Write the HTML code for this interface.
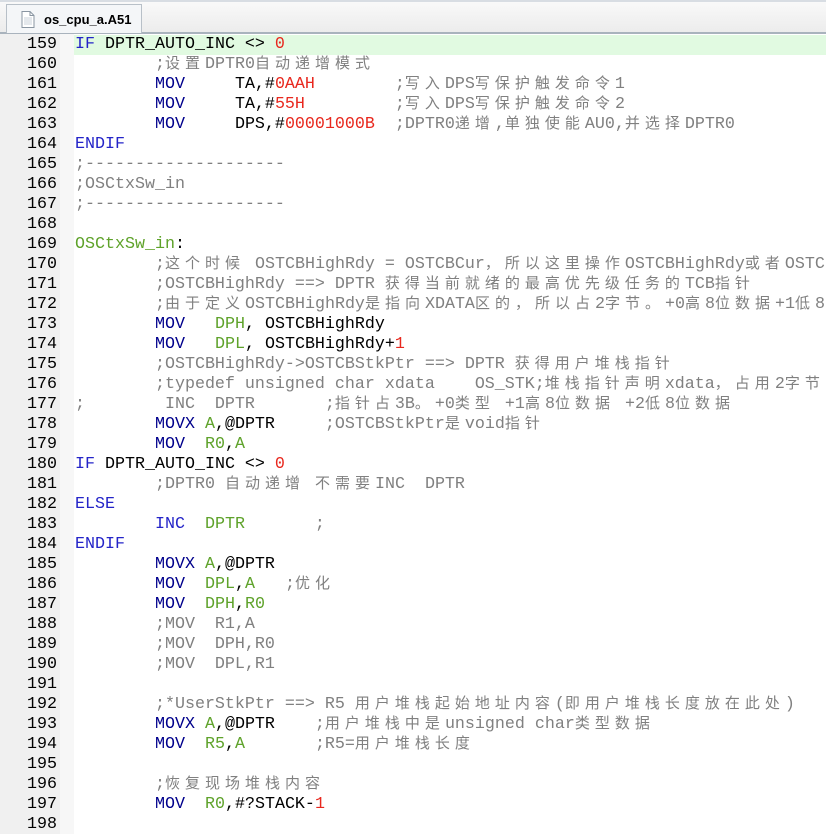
<!DOCTYPE html>
<html><head><meta charset="utf-8"><style>
body{margin:0;width:826px;height:826px;overflow:hidden;background:#fff;position:relative;font-family:"Liberation Mono","DejaVu Sans Mono",monospace;}
#tabbar{position:absolute;left:0;top:0;width:826px;height:32px;background:linear-gradient(#fafafa,#ececec);border-bottom:2px solid #a9b3bd;}
#tabbar:before{content:"";position:absolute;left:0;top:0;width:826px;height:2px;background:#d8dde3}
#tab{position:absolute;left:6px;top:4px;width:136px;height:29px;background:#f4f6f8;border:1px solid #b8c0c8;border-bottom:none;box-sizing:border-box;font:bold 13px "Liberation Sans",sans-serif;color:#000;}
#tab span{position:absolute;left:37px;top:7px}
#gut{position:absolute;left:0;top:34px;width:60px;height:800px;background:#f0f0f0}
#gut2{position:absolute;left:60px;top:34px;width:14px;height:800px;background:#f7f7f7}
#hl{position:absolute;left:74px;top:35px;width:752px;height:20px;background:#e1fae1}
.ln{position:absolute;left:0;width:57px;height:20px;text-align:right;font-family:"Liberation Mono",monospace;font-size:16.67px;line-height:20px;color:#000}
.cd{position:absolute;left:75px;height:20px;overflow:hidden;font-family:"Liberation Mono","DejaVu Sans Mono",monospace;font-size:16.67px;line-height:20px;white-space:pre;color:#000}
.k{color:#2424c8}.m{color:#00008c}.g{color:#5ea22a}.r{color:#e8281e}.c{color:#808080}
b{font-weight:normal;font-size:15px;line-height:1;letter-spacing:5px;font-family:"Noto Sans CJK SC",sans-serif;vertical-align:baseline}
</style></head><body>
<div id="tabbar"><div id="tab"><svg style="position:absolute;left:14px;top:6px" width="14" height="17" viewBox="0 0 14 17"><path d="M1 .5h8l4 4v12H1z" fill="#fff" stroke="#8a96a2"/><path d="M9 .5v4h4" fill="none" stroke="#8a96a2"/><path d="M3 7h8M3 9h8M3 11h8M3 13h8" stroke="#c8d0d8"/></svg><span>os_cpu_a.A51</span></div></div>
<div id="gut"></div><div id="gut2"></div><div id="hl"></div>
<div class="ln" style="top:35px">159</div><div class="cd" style="top:35px"><span class="k">IF</span> DPTR_AUTO_INC &lt;&gt; <span class="r">0</span></div>
<div class="ln" style="top:55px">160</div><div class="cd c" style="top:55px">        ;<b>设置</b>DPTR0<b>自动递增模式</b></div>
<div class="ln" style="top:75px">161</div><div class="cd" style="top:75px">        <span class="m">MOV</span>     TA,#<span class="r">0AAH</span>        <span class="c">;<b>写入</b>DPS<b>写保护触发命令</b>1</span></div>
<div class="ln" style="top:95px">162</div><div class="cd" style="top:95px">        <span class="m">MOV</span>     TA,#<span class="r">55H</span>         <span class="c">;<b>写入</b>DPS<b>写保护触发命令</b>2</span></div>
<div class="ln" style="top:115px">163</div><div class="cd" style="top:115px">        <span class="m">MOV</span>     DPS,#<span class="r">00001000B</span>  <span class="c">;DPTR0<b>递增</b>,<b>单独使能</b>AU0,<b>并选择</b>DPTR0</span></div>
<div class="ln" style="top:135px">164</div><div class="cd k" style="top:135px">ENDIF</div>
<div class="ln" style="top:155px">165</div><div class="cd c" style="top:155px">;--------------------</div>
<div class="ln" style="top:175px">166</div><div class="cd c" style="top:175px">;OSCtxSw_in</div>
<div class="ln" style="top:195px">167</div><div class="cd c" style="top:195px">;--------------------</div>
<div class="ln" style="top:215px">168</div>
<div class="ln" style="top:235px">169</div><div class="cd" style="top:235px"><span class="g">OSCtxSw_in</span>:</div>
<div class="ln" style="top:255px">170</div><div class="cd c" style="top:255px">        ;<b>这个时候</b> OSTCBHighRdy = OSTCBCur<b>，所以这里操作</b>OSTCBHighRdy<b>或者</b>OSTC</div>
<div class="ln" style="top:275px">171</div><div class="cd c" style="top:275px">        ;OSTCBHighRdy ==&gt; DPTR <b>获得当前就绪的最高优先级任务的</b>TCB<b>指针</b></div>
<div class="ln" style="top:295px">172</div><div class="cd c" style="top:295px">        ;<b>由于定义</b>OSTCBHighRdy<b>是指向</b>XDATA<b>区的，所以占</b>2<b>字节。</b>+0<b>高</b>8<b>位数据</b>+1<b>低</b>8</div>
<div class="ln" style="top:315px">173</div><div class="cd" style="top:315px">        <span class="m">MOV</span>   <span class="g">DPH</span>, OSTCBHighRdy</div>
<div class="ln" style="top:335px">174</div><div class="cd" style="top:335px">        <span class="m">MOV</span>   <span class="g">DPL</span>, OSTCBHighRdy+<span class="r">1</span></div>
<div class="ln" style="top:355px">175</div><div class="cd c" style="top:355px">        ;OSTCBHighRdy-&gt;OSTCBStkPtr ==&gt; DPTR <b>获得用户堆栈指针</b></div>
<div class="ln" style="top:375px">176</div><div class="cd c" style="top:375px">        ;typedef unsigned char xdata    OS_STK;<b>堆栈指针声明</b>xdata<b>，占用</b>2<b>字节</b></div>
<div class="ln" style="top:395px">177</div><div class="cd c" style="top:395px">;        INC  DPTR       ;<b>指针占</b>3B<b>。</b>+0<b>类型</b> +1<b>高</b>8<b>位数据</b> +2<b>低</b>8<b>位数据</b></div>
<div class="ln" style="top:415px">178</div><div class="cd" style="top:415px">        <span class="m">MOVX</span> <span class="g">A</span>,@DPTR     <span class="c">;OSTCBStkPtr<b>是</b>void<b>指针</b></span></div>
<div class="ln" style="top:435px">179</div><div class="cd" style="top:435px">        <span class="m">MOV</span>  <span class="g">R0</span>,<span class="g">A</span></div>
<div class="ln" style="top:455px">180</div><div class="cd" style="top:455px"><span class="k">IF</span> DPTR_AUTO_INC &lt;&gt; <span class="r">0</span></div>
<div class="ln" style="top:475px">181</div><div class="cd c" style="top:475px">        ;DPTR0 <b>自动递增</b> <b>不需要</b>INC  DPTR</div>
<div class="ln" style="top:495px">182</div><div class="cd k" style="top:495px">ELSE</div>
<div class="ln" style="top:515px">183</div><div class="cd" style="top:515px">        <span class="k">INC</span>  <span class="g">DPTR</span>       <span class="c">;</span></div>
<div class="ln" style="top:535px">184</div><div class="cd k" style="top:535px">ENDIF</div>
<div class="ln" style="top:555px">185</div><div class="cd" style="top:555px">        <span class="m">MOVX</span> <span class="g">A</span>,@DPTR</div>
<div class="ln" style="top:575px">186</div><div class="cd" style="top:575px">        <span class="m">MOV</span>  <span class="g">DPL</span>,<span class="g">A</span>   <span class="c">;<b>优化</b></span></div>
<div class="ln" style="top:595px">187</div><div class="cd" style="top:595px">        <span class="m">MOV</span>  <span class="g">DPH</span>,<span class="g">R0</span></div>
<div class="ln" style="top:615px">188</div><div class="cd c" style="top:615px">        ;MOV  R1,A</div>
<div class="ln" style="top:635px">189</div><div class="cd c" style="top:635px">        ;MOV  DPH,R0</div>
<div class="ln" style="top:655px">190</div><div class="cd c" style="top:655px">        ;MOV  DPL,R1</div>
<div class="ln" style="top:675px">191</div>
<div class="ln" style="top:695px">192</div><div class="cd c" style="top:695px">        ;*UserStkPtr ==&gt; R5 <b>用户堆栈起始地址内容</b>(<b>即用户堆栈长度放在此处</b>)</div>
<div class="ln" style="top:715px">193</div><div class="cd" style="top:715px">        <span class="m">MOVX</span> <span class="g">A</span>,@DPTR    <span class="c">;<b>用户堆栈中是</b>unsigned char<b>类型数据</b></span></div>
<div class="ln" style="top:735px">194</div><div class="cd" style="top:735px">        <span class="m">MOV</span>  <span class="g">R5</span>,<span class="g">A</span>       <span class="c">;R5=<b>用户堆栈长度</b></span></div>
<div class="ln" style="top:755px">195</div>
<div class="ln" style="top:775px">196</div><div class="cd c" style="top:775px">        ;<b>恢复现场堆栈内容</b></div>
<div class="ln" style="top:795px">197</div><div class="cd" style="top:795px">        <span class="m">MOV</span>  <span class="g">R0</span>,#?STACK-<span class="r">1</span></div>
<div class="ln" style="top:815px">198</div>
</body></html>
